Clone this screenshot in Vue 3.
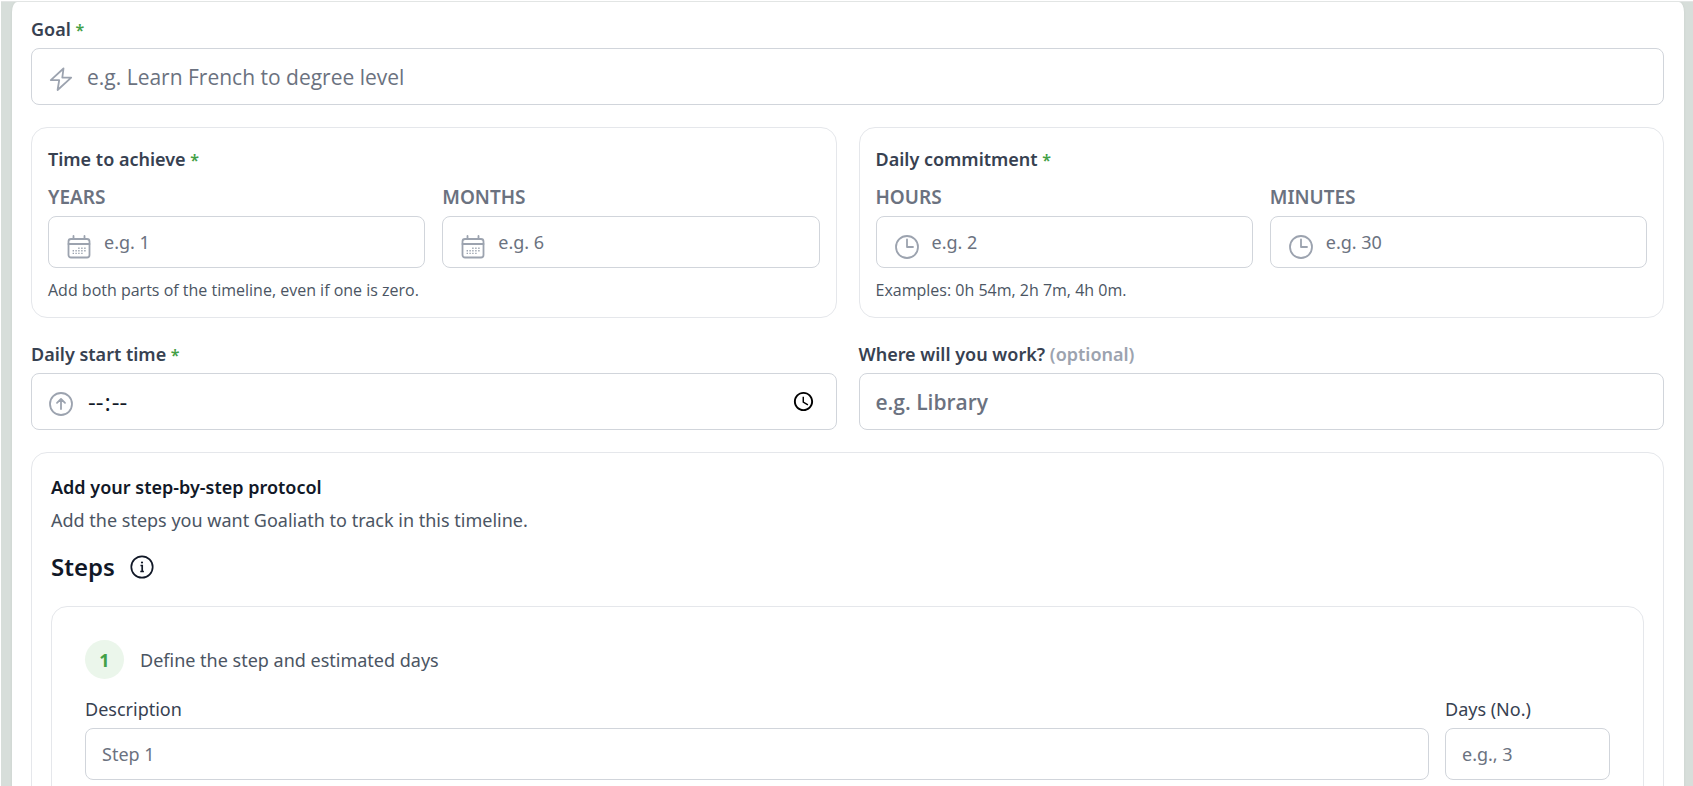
<script setup>
import { reactive } from 'vue'

const form = reactive({
  goal: '',
  years: '',
  months: '',
  hours: '',
  minutes: '',
  start: '',
  place: '',
  step: '',
  days: ''
})

const groups = [
  {
    id: 'timeline',
    title: 'Time to achieve',
    icon: 'calendar',
    hint: 'Add both parts of the timeline, even if one is zero.',
    parts: [
      { key: 'years', label: 'YEARS', placeholder: 'e.g. 1' },
      { key: 'months', label: 'MONTHS', placeholder: 'e.g. 6' }
    ]
  },
  {
    id: 'commitment',
    title: 'Daily commitment',
    icon: 'clock',
    hint: 'Examples: 0h 54m, 2h 7m, 4h 0m.',
    parts: [
      { key: 'hours', label: 'HOURS', placeholder: 'e.g. 2' },
      { key: 'minutes', label: 'MINUTES', placeholder: 'e.g. 30' }
    ]
  }
]
</script>

<template>
  <div class="page">
    <form class="sheet" @submit.prevent>
      <div class="group">
        <label class="label" for="goal">Goal <span class="star">*</span></label>
        <div class="field large">
          <svg class="icon" viewBox="0 0 24 24" aria-hidden="true">
            <path d="M14.5 1.5 1.8 13.2h8.4L8.6 23 22.2 10.6h-8.9z" />
          </svg>
          <input id="goal" v-model="form.goal" type="text" placeholder="e.g. Learn French to degree level" />
        </div>
      </div>

      <div class="pair">
        <div v-for="g in groups" :key="g.id" class="card" role="group" :aria-labelledby="g.id">
          <p :id="g.id" class="label">{{ g.title }} <span class="star">*</span></p>
          <div class="parts">
            <div v-for="p in g.parts" :key="p.key" class="group">
              <label class="label unit" :for="p.key">{{ p.label }}</label>
              <div class="field small">
                <svg v-if="g.icon === 'calendar'" class="icon" viewBox="0 0 24 24" aria-hidden="true">
                  <rect x="1.5" y="4" width="21" height="18.5" rx="2.5" />
                  <path d="M1.5 9h21M6.5 1v3M17.5 1v3" />
                  <path
                    class="dots"
                    d="M11.2 13.2h1.4M14.2 13.2h1.4M17.2 13.2h1.4M5.6 15.8h1.4M8.4 15.8h1.4M11.2 15.8h1.4M14.2 15.8h1.4M17.2 15.8h1.4M5.6 18.4h1.4M8.4 18.4h1.4M11.2 18.4h1.4M14.2 18.4h1.4"
                  />
                </svg>
                <svg v-else class="icon" viewBox="0 0 24 24" aria-hidden="true">
                  <circle cx="12" cy="12" r="11" />
                  <path d="M12 4.5V12h6" />
                </svg>
                <input :id="p.key" v-model="form[p.key]" type="text" inputmode="numeric" :placeholder="p.placeholder" />
              </div>
            </div>
          </div>
          <p class="hint">{{ g.hint }}</p>
        </div>
      </div>

      <div class="pair">
        <div class="group">
          <label class="label" for="start">Daily start time <span class="star">*</span></label>
          <div class="field large">
            <svg class="icon" viewBox="0 0 24 24" aria-hidden="true">
              <circle cx="12" cy="12" r="11" />
              <path d="M12 17V7M8 10.8 12 7l4 3.8" />
            </svg>
            <input id="start" v-model="form.start" type="time" />
          </div>
        </div>
        <div class="group">
          <label class="label" for="place">Where will you work? <span class="optional">(optional)</span></label>
          <div class="field large strong">
            <input id="place" v-model="form.place" type="text" placeholder="e.g. Library" />
          </div>
        </div>
      </div>

      <section class="protocol">
        <h2 class="title">Add your step-by-step protocol</h2>
        <p class="text">Add the steps you want Goaliath to track in this timeline.</p>
        <div class="steps-head">
          <h3>Steps</h3>
          <button type="button" class="info" aria-label="About steps">
            <svg viewBox="0 0 24 24" aria-hidden="true">
              <circle cx="12" cy="12" r="10.7" />
              <path d="M10.5 10.5h1.7V16.5M10.3 16.5h3.6" />
              <circle class="dot" cx="12" cy="7.5" r="1.1" />
            </svg>
          </button>
        </div>
        <div class="step">
          <div class="step-head">
            <span class="badge">1</span>
            <p class="text">Define the step and estimated days</p>
          </div>
          <div class="step-fields">
            <div class="group">
              <label class="label plain" for="step">Description</label>
              <div class="field small">
                <input id="step" v-model="form.step" type="text" placeholder="Step 1" />
              </div>
            </div>
            <div class="group">
              <label class="label plain" for="days">Days (No.)</label>
              <div class="field small">
                <input id="days" v-model="form.days" type="text" inputmode="numeric" placeholder="e.g., 3" />
              </div>
            </div>
          </div>
        </div>
      </section>
    </form>
  </div>
</template>

<style>
body {
  margin: 0;
  background: #fff;
}
</style>

<style scoped>
* {
  box-sizing: border-box;
}
.page {
  height: calc(100vh - 1px);
  margin: 1px 0 0 1px;
  padding: 0 9px 0 11px;
  overflow: hidden;
  border-top: 1px solid #e2e5e4;
  background: #d7deda;
  font-family: "Noto Sans", "Open Sans", sans-serif;
  font-size: 18px;
  line-height: 28px;
  color: #111827;
}
.sheet {
  display: flex;
  flex-direction: column;
  gap: 22px;
  min-height: 100%;
  padding: 13px 20px 22px 19px;
  border-radius: 5px 5px 0 0 / 10px 10px 0 0;
  background: #fff;
  box-shadow: 0 0 3px rgba(0, 0, 0, 0.06);
}
p,
h2,
h3 {
  margin: 0;
}
.group {
  display: flex;
  flex-direction: column;
  gap: 5px;
  min-width: 0;
}
.pair {
  display: grid;
  grid-template-columns: 1fr 1fr;
  gap: 22px;
}
.label {
  font-weight: 600;
  color: #374151;
}
.unit {
  font-size: 19px;
  color: #6b7280;
}
.plain {
  font-weight: 400;
}
.star {
  color: #43a047;
  font-size: 16px;
  line-height: 1;
}
.optional {
  color: #9ca3af;
}
.field {
  display: flex;
  align-items: center;
  gap: 14px;
  padding: 0 16px;
  border: 1px solid #d1d5db;
  border-radius: 8px;
  background: #fff;
}
.large {
  height: 57px;
  padding: 0 17px;
  font-family: "Open Sans", "Noto Sans", sans-serif;
  font-size: 21px;
}
.small {
  height: 52px;
}
.small .icon {
  margin: 9px 0 0 2px;
}
.small:has(.icon) {
  gap: 13px;
}
.strong {
  padding: 0 16px;
  font-weight: 600;
}
.icon {
  flex: none;
  width: 24px;
  height: 24px;
  margin-top: 4px;
  fill: none;
  stroke: #9ca3af;
  stroke-width: 1.8;
  stroke-linecap: round;
  stroke-linejoin: round;
}
.dots {
  stroke-width: 1.4;
  stroke-linecap: butt;
}
input {
  flex: 1;
  min-width: 0;
  height: 100%;
  padding: 0;
  border: 0;
  outline: 0;
  background: transparent;
  color: #111827;
  font: inherit;
}
input::placeholder {
  color: #6b7280;
  opacity: 1;
}
input[type="time"] {
  font-size: 24px;
}
input::-webkit-datetime-edit-ampm-field {
  display: none;
}
input::-webkit-calendar-picker-indicator {
  width: 23px;
  height: 23px;
  padding: 0;
  margin-right: 4px;
}
.card {
  min-width: 0;
  padding: 17px 16px 14px;
  border: 1px solid #e5e7eb;
  border-radius: 16px;
}
.parts {
  display: grid;
  grid-template-columns: 1fr 1fr;
  gap: 17px;
  margin: 10px 0 9px;
}
.hint {
  font-family: "Open Sans", "Noto Sans", sans-serif;
  font-size: 16px;
  line-height: 26px;
  color: #4b5563;
}
.protocol {
  padding: 20px 19px;
  border: 1px solid #e5e7eb;
  border-radius: 16px;
}
.title {
  margin-bottom: 5px;
  font-size: 18px;
  font-weight: 600;
}
.text {
  color: #4b5563;
}
.steps-head {
  display: flex;
  align-items: center;
  gap: 15px;
  margin: 15px 0 21px;
}
h3 {
  font-size: 24px;
  line-height: 36px;
  font-weight: 600;
}
.info {
  display: flex;
  padding: 0;
  border: 0;
  background: none;
}
.info svg {
  width: 24px;
  height: 24px;
  fill: none;
  stroke: #111827;
  stroke-width: 1.7;
}
.info .dot {
  fill: #111827;
  stroke: none;
}
.step {
  padding: 33px;
  border: 1px solid #e5e7eb;
  border-radius: 16px;
}
.step-head {
  display: flex;
  align-items: center;
  gap: 16px;
  margin-bottom: 16px;
}
.badge {
  display: grid;
  place-items: center;
  width: 39px;
  height: 39px;
  border-radius: 50%;
  background: #ebf6eb;
  color: #43a047;
  font-weight: 700;
}
.step-fields {
  display: grid;
  grid-template-columns: 1fr 165px;
  gap: 16px;
}
</style>
